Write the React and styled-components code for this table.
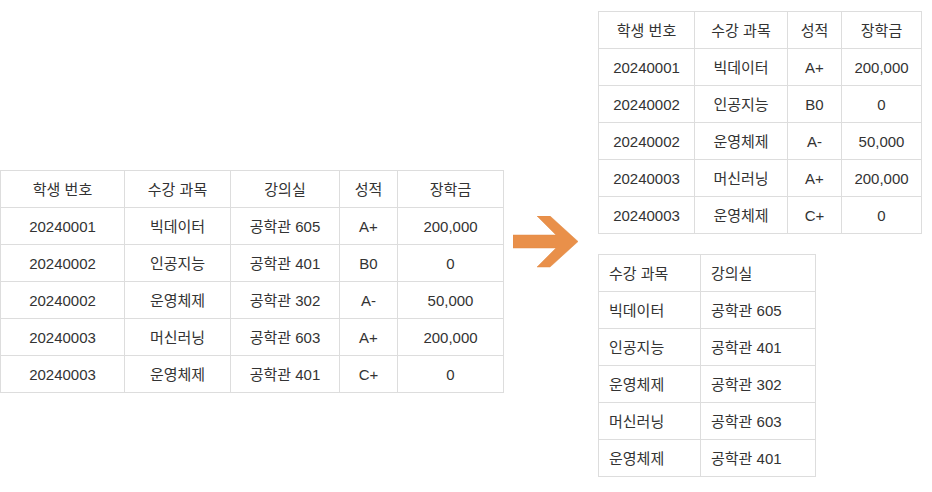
import React from "react";
import styled, { createGlobalStyle } from "styled-components";

const Global = createGlobalStyle`
  html, body { margin: 0; padding: 0; background: #fff; }
  body {
    font-family: "Liberation Sans", "Noto Sans CJK KR", Arial, sans-serif;
    color: #333;
  }
`;

const Page = styled.div`
  display: flex;
  align-items: flex-start;
  padding-top: 11px;
  width: 932px;
  height: 492px;
  box-sizing: border-box;
`;

const LeftSection = styled.div`
  margin-top: 159px;
`;

const ArrowBox = styled.div`
  margin: 205px 19px 0 9px;
  width: 66px;
  height: 52px;
  display: flex;
`;

const RightColumn = styled.div`
  display: flex;
  flex-direction: column;
  align-items: flex-start;
  gap: 20px;
`;

const Table = styled.table`
  border-collapse: collapse;
  table-layout: fixed;
  width: ${(p) => p.$width}px;
  font-size: 15px;
  color: #333;
`;

const Cell = styled.td`
  border: 1px solid #ddd;
  height: 36px;
  padding: 0 ${(p) => (p.$align === "left" ? "10px" : "0")};
  text-align: ${(p) => p.$align || "center"};
  vertical-align: middle;
  font-weight: normal;
  white-space: nowrap;
  line-height: 1;
`;

const HeadCell = styled(Cell).attrs({ as: "th" })``;

function DataTable({ cols, headers, rows, align }) {
  const width = cols.reduce((a, b) => a + b, 0) + 1;
  return (
    <Table $width={width}>
      <colgroup>
        {cols.map((w, i) => (
          <col key={i} style={{ width: w }} />
        ))}
      </colgroup>
      <thead>
        <tr>
          {headers.map((h) => (
            <HeadCell key={h} $align={align}>
              {h}
            </HeadCell>
          ))}
        </tr>
      </thead>
      <tbody>
        {rows.map((r, i) => (
          <tr key={i}>
            {r.map((c, j) => (
              <Cell key={j} $align={align}>
                {c}
              </Cell>
            ))}
          </tr>
        ))}
      </tbody>
    </Table>
  );
}

const full = [
  ["20240001", "빅데이터", "공학관 605", "A+", "200,000"],
  ["20240002", "인공지능", "공학관 401", "B0", "0"],
  ["20240002", "운영체제", "공학관 302", "A-", "50,000"],
  ["20240003", "머신러닝", "공학관 603", "A+", "200,000"],
  ["20240003", "운영체제", "공학관 401", "C+", "0"],
];

function Arrow() {
  return (
    <svg width="66" height="52" viewBox="0 0 66 52">
      <polygon
        points="0,19 43,19 24,0 37,0 65,25.5 37,51 24,51 43,32 0,32"
        fill="#E9904A"
        stroke="#E08A44"
        strokeWidth="0.5"
      />
    </svg>
  );
}

export default function App() {
  return (
    <>
      <Global />
      <Page>
        <LeftSection>
          <DataTable
            cols={[124, 106, 109, 58, 106]}
            headers={["학생 번호", "수강 과목", "강의실", "성적", "장학금"]}
            rows={full}
          />
        </LeftSection>
        <ArrowBox>
          <Arrow />
        </ArrowBox>
        <RightColumn>
          <DataTable
            cols={[96, 93, 54, 80]}
            headers={["학생 번호", "수강 과목", "성적", "장학금"]}
            rows={full.map((r) => [r[0], r[1], r[3], r[4]])}
          />
          <DataTable
            cols={[102, 115]}
            headers={["수강 과목", "강의실"]}
            rows={full.map((r) => [r[1], r[2]])}
            align="left"
          />
        </RightColumn>
      </Page>
    </>
  );
}
